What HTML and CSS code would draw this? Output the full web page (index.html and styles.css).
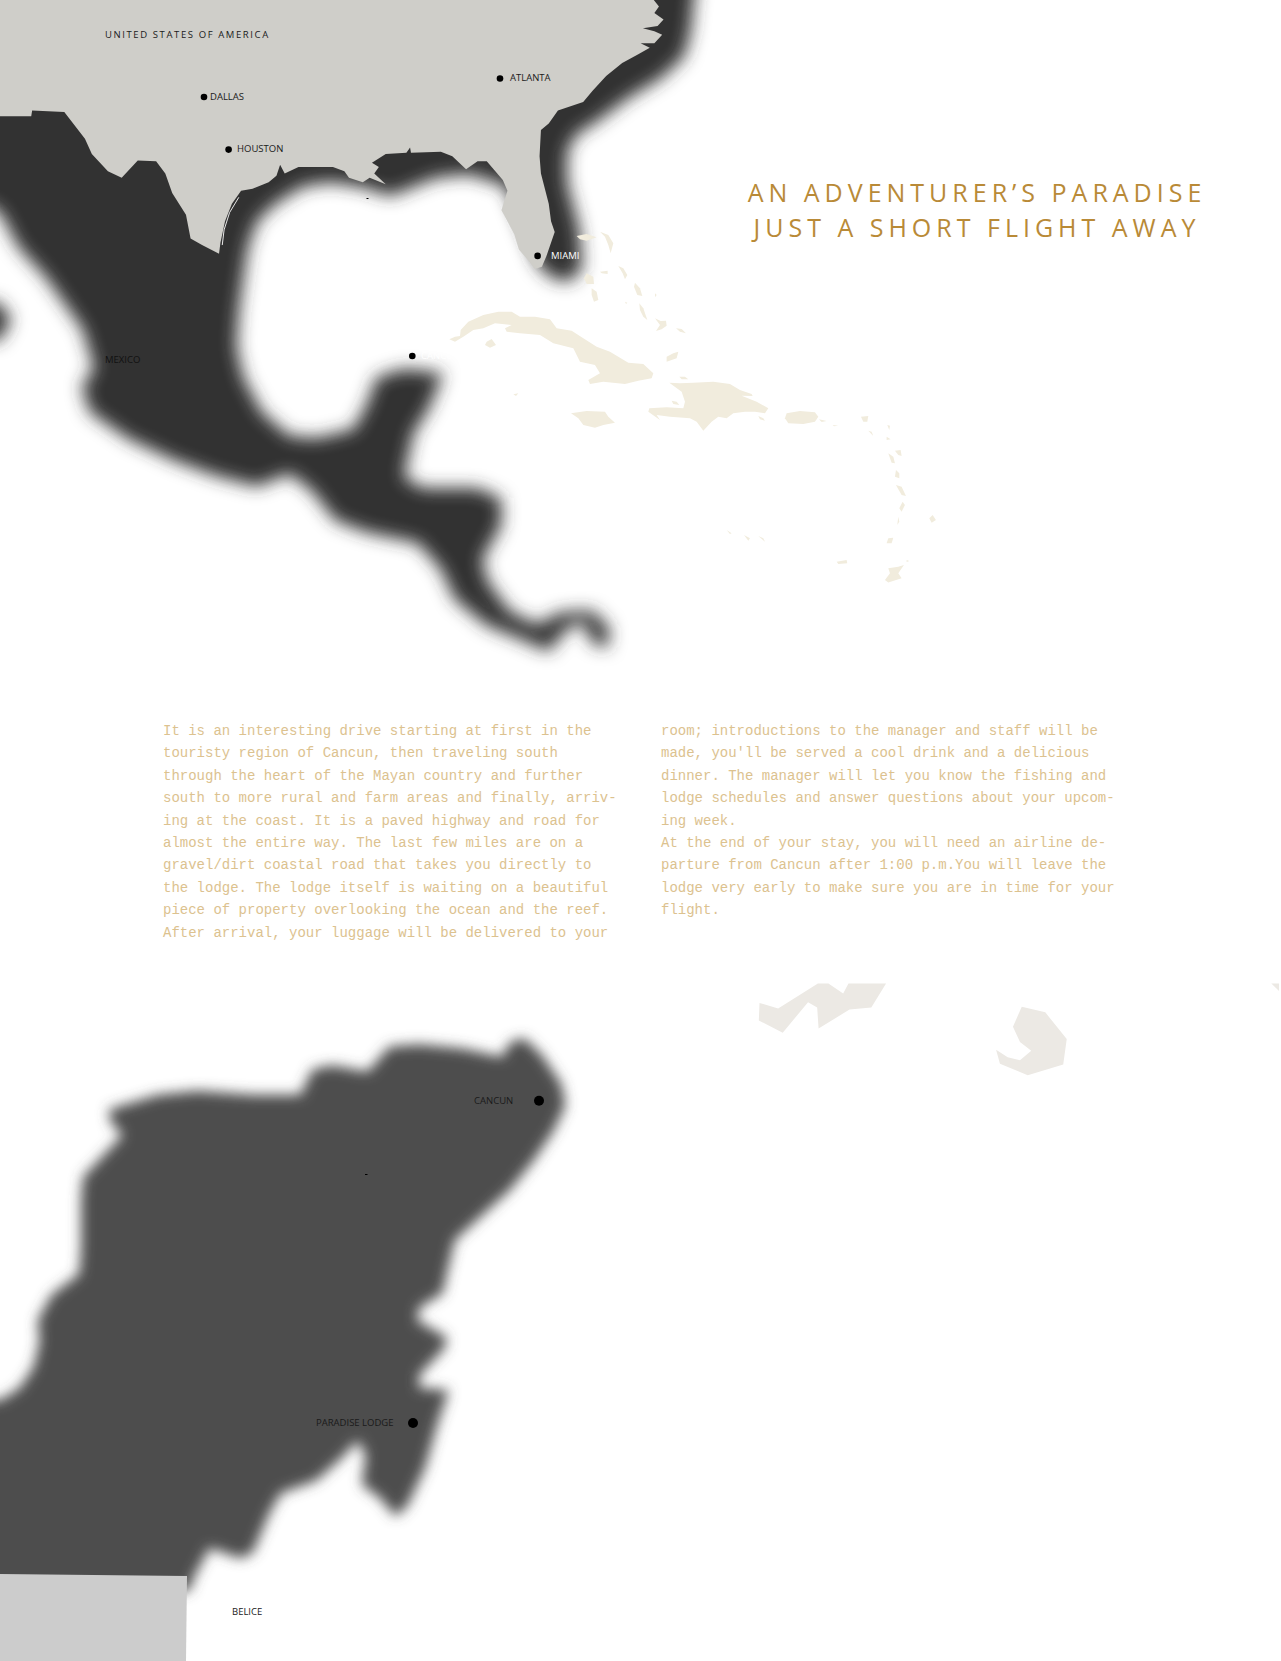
FILE: index.html
```html
<!DOCTYPE html>
<html lang="en">
<head>
<meta charset="utf-8">
<title>An Adventurer's Paradise</title>
<link rel="stylesheet" href="styles.css">
</head>
<body>
<main class="page">
  <section class="map map-top">
    <svg class="map-art" viewBox="0 0 1281 720" aria-hidden="true">
      <defs>
        <filter id="soft" x="-20%" y="-20%" width="140%" height="140%"><feGaussianBlur stdDeviation="8.5"/></filter>
        <filter id="soft-low" x="-20%" y="-20%" width="140%" height="140%"><feGaussianBlur stdDeviation="6.5"/></filter>
        <filter id="crisp"><feGaussianBlur stdDeviation="0.35"/></filter>
      </defs>
      <g filter="url(#soft)" class="land-dark">
        <g transform="scale(.4592 .4337)">
          <polygon points="-150,-150 1530,-150 1510,10 1505,70 1490,130 1440,180 1370,225 1300,280 1255,310 1235,350 1235,420 1262,530 1268,620 1238,650 1200,640 1170,610 1100,428 1020,402 950,410 880,440 850,452 790,432 720,420 660,430 600,470 560,510 540,570 530,640 520,720 515,800 530,870 570,950 630,1005 690,1010 770,990 800,930 820,870 880,850 965,860 935,940 900,1000 880,1100 920,1125 1040,1125 1092,1150 1092,1210 1050,1290 1062,1340 1110,1410 1170,1440 1220,1412 1290,1408 1328,1450 1322,1495 1290,1482 1268,1432 1232,1452 1195,1502 1130,1472 1060,1442 990,1382 960,1312 910,1252 800,1228 730,1200 680,1132 630,1092 560,1122 470,1097 380,1062 280,1012 195,950 178,890 205,850 180,760 100,640 40,570 0,490 -150,400"/>
          <polygon points="-100,700 -5,695 25,735 0,785 -100,785"/>
        </g>
      </g>
      <g class="land-usa" filter="url(#crisp)">
        <g transform="scale(.4592 .4337)">
          <polygon points="-5,-5 1420,-5 1435,15 1425,30 1445,45 1432,60 1400,65 1425,72 1442,80 1425,100 1395,100 1415,110 1390,125 1355,145 1320,175 1290,210 1270,235 1215,255 1195,285 1178,300 1175,360 1178,400 1195,470 1200,510 1208,535 1190,590 1180,615 1165,620 1150,600 1130,575 1120,540 1105,510 1092,485 1105,440 1095,415 1060,372 1040,372 1015,390 985,360 960,350 895,352 893,340 885,352 840,355 810,375 825,385 815,400 840,425 805,410 790,420 760,410 750,395 725,385 690,385 650,385 620,400 610,380 602,405 585,420 550,435 525,440 505,470 490,510 480,560 477,585 440,565 415,550 405,495 375,445 360,400 340,372 300,370 265,410 235,395 200,355 185,320 140,258 70,255 68,268 -5,268"/>
        </g>
      </g>
      <polyline class="sandbar" transform="scale(.4592 .4337)" points="520,455 500,490 488,530 484,565"/>
      <g class="land-cream" filter="url(#crisp)">
        <g transform="translate(440 160) scale(.3333)">
          <polygon points="28,538 45,530 60,528 62,510 85,485 130,465 175,455 215,455 240,470 285,470 330,478 350,505 395,512 430,535 470,560 510,575 535,590 565,608 610,612 640,640 635,655 595,662 555,672 490,665 450,672 445,660 480,640 465,615 420,605 400,565 340,550 300,525 240,520 200,515 195,505 215,495 165,490 130,505 100,510 70,530 45,545"/>
          <polygon points="140,545 155,537 168,555 150,563 135,555"/>
          <polygon points="688,668 720,670 760,668 820,665 870,672 900,690 935,702 938,708 905,707 950,725 985,745 975,760 945,755 915,755 880,760 860,775 835,770 815,785 790,812 770,785 750,775 690,770 650,765 660,780 625,755 628,745 680,742 730,745 735,725 725,695"/>
          <polygon points="393,760 440,753 495,755 505,770 525,788 490,795 465,803 430,795 415,775"/>
          <polygon points="1040,760 1080,753 1125,757 1135,770 1125,785 1090,792 1045,790 1035,775"/>
          <polygon points="1345,1225 1375,1220 1392,1215 1375,1240 1385,1255 1345,1268 1335,1260 1350,1240"/>
          <polygon points="410,228 440,222 470,232 440,242 420,238"/>
          <polygon points="480,215 505,225 520,250 512,280 505,255 495,230"/>
          <polygon points="535,318 550,325 562,345 555,358 548,340"/>
          <polygon points="480,335 503,332 503,342 485,340"/>
          <polygon points="440,340 460,350 462,372 440,372 432,355"/>
          <polygon points="455,385 470,395 475,420 462,425 455,405"/>
          <polygon points="585,368 600,385 607,408 592,405 582,380"/>
          <polygon points="598,430 610,445 622,480 610,470 600,450"/>
          <polygon points="645,400 650,405 645,412"/>
          <polygon points="555,425 562,428 558,432"/>
          <polygon points="645,475 662,483 678,482 680,497 665,508 648,513 660,495"/>
          <polygon points="708,505 725,507 738,520 720,515"/>
          <polygon points="680,590 700,580 715,575 710,595 680,605"/>
          <polygon points="718,650 735,650 745,658 725,658"/>
          <polygon points="220,703 235,700 228,708"/>
          <polygon points="695,722 710,725 718,735 700,732"/>
          <polygon points="955,768 970,775 975,782 960,778"/>
          <polygon points="1137,778 1160,783 1145,786"/>
          <polygon points="1178,795 1195,797 1182,799"/>
          <polygon points="1263,770 1285,768 1282,785 1270,785"/>
          <polygon points="1342,795 1350,797 1348,810"/>
          <polygon points="1285,812 1295,815 1300,828"/>
          <polygon points="1340,830 1352,838 1340,840"/>
          <polygon points="1345,880 1360,890 1365,910 1355,908"/>
          <polygon points="1365,872 1382,870 1385,888 1375,885"/>
          <polygon points="1368,930 1378,940 1378,955 1365,950"/>
          <polygon points="1368,975 1385,980 1398,1008 1385,1005"/>
          <polygon points="1388,1025 1395,1035 1385,1055 1378,1045"/>
          <polygon points="1375,1070 1378,1085 1372,1095"/>
          <polygon points="1345,1135 1360,1133 1355,1150 1340,1150"/>
          <polygon points="1468,1075 1478,1065 1488,1080 1475,1088"/>
          <polygon points="860,1110 875,1120 870,1122"/>
          <polygon points="912,1125 930,1135 925,1142"/>
          <polygon points="955,1128 970,1135 975,1145"/>
          <polygon points="1190,1205 1220,1200 1222,1210 1195,1212"/>
          <polygon points="1400,1200 1408,1203 1400,1206"/>
        </g>
      </g>
      <circle class="pin" cx="500" cy="78.5" r="3.3"/>
      <circle class="pin" cx="204" cy="97" r="3.3"/>
      <circle class="pin" cx="228.6" cy="149.6" r="3.3"/>
      <circle class="pin" cx="537.6" cy="255.9" r="3.3"/>
      <circle class="pin" cx="412.3" cy="356" r="3.3"/>
      <rect class="pin" x="366.5" y="198" width="2" height="1"/>
    </svg>
    <span class="label label-wide at-usa">UNITED STATES OF AMERICA</span>
    <span class="label at-atlanta">ATLANTA</span>
    <span class="label at-dallas">DALLAS</span>
    <span class="label at-houston">HOUSTON</span>
    <span class="label label-light at-miami">MIAMI</span>
    <span class="label label-light at-cancun">CANCUN</span>
    <span class="label at-mexico">MEXICO</span>
    <h1 class="title">AN ADVENTURER’S PARADISE<br>JUST A SHORT FLIGHT AWAY</h1>
  </section>

  <section class="story">
    <p class="story-col">It is an interesting drive starting at first in the<br>touristy region of Cancun, then traveling south<br>through the heart of the Mayan country and further<br>south to more rural and farm areas and finally, arriv-<br>ing at the coast. It is a paved highway and road for<br>almost the entire way. The last few miles are on a<br>gravel/dirt coastal road that takes you directly to<br>the lodge. The lodge itself is waiting on a beautiful<br>piece of property overlooking the ocean and the reef.<br>After arrival, your luggage will be delivered to your</p>
    <p class="story-col">room; introductions to the manager and staff will be<br>made, you'll be served a cool drink and a delicious<br>dinner. The manager will let you know the fishing and<br>lodge schedules and answer questions about your upcom-<br>ing week.<br>At the end of your stay, you will need an airline de-<br>parture from Cancun after 1:00 p.m.You will leave the<br>lodge very early to make sure you are in time for your<br>flight.</p>
  </section>

  <section class="map map-bottom">
    <svg class="map-art" viewBox="0 970 1281 691" aria-hidden="true">
      <g class="land-pale" filter="url(#crisp)">
        <g transform="translate(730 960) scale(.3515 .3515)">
          <polygon points="84,122 137,138 250,67 280,67 322,95 337,67 444,67 402,135 340,141 252,195 248,135 222,120 150,207 82,172"/>
          <polygon points="830,133 897,149 958,225 948,297 847,328 768,295 757,255 790,277 825,285 857,258 825,233 805,190"/>
          <polygon points="1540,67 1562,67 1562,88"/>
        </g>
      </g>
      <g filter="url(#soft-low)" class="land-yucatan">
        <polygon transform="translate(0 1000) scale(.3954 .4216)" points="-100,950 0,950 50,920 85,870 100,810 95,760 130,700 200,650 205,590 205,470 210,420 260,370 310,320 280,290 275,260 400,225 500,215 640,225 760,225 790,165 840,155 930,170 985,110 1060,105 1170,115 1270,135 1290,100 1325,90 1370,130 1420,200 1430,250 1400,310 1350,380 1290,450 1220,510 1150,570 1130,650 1120,695 1060,730 1055,760 1130,800 1125,825 1060,890 1060,920 1135,925 1105,1010 1075,1110 1030,1200 1000,1225 960,1180 915,1150 925,1080 905,1045 860,1090 800,1140 710,1170 680,1220 640,1310 610,1325 530,1300 490,1370 480,1400 -100,1500"/>
      </g>
      <polygon class="land-belice" points="-1,1574 187,1576 186,1662 -1,1662"/>
      <circle class="pin" cx="539" cy="1100.8" r="5"/>
      <circle class="pin" cx="413" cy="1423" r="5"/>
      <rect class="pin" x="365" y="1174" width="2.5" height="1"/>
    </svg>
    <span class="label at-cancun-big">CANCUN</span>
    <span class="label at-lodge">PARADISE LODGE</span>
    <span class="label at-belice">BELICE</span>
  </section>
</main>
</body>
</html>
```

FILE: styles.css
```css
html, body {
  margin: 0;
  padding: 0;
  background: #fff;
}

.page {
  width: 1281px;
  height: 1661px;
  display: flex;
  flex-direction: column;
  overflow: hidden;
  font-family: "Open Sans", "Noto Sans", sans-serif;
}

.map {
  position: relative;
}

.map-top {
  height: 720px;
  flex: none;
}

.map-bottom {
  flex: 1;
}

.map-art {
  position: absolute;
  inset: 0;
  width: 100%;
  height: 100%;
  display: block;
}

.land-dark { fill: #333; }
.land-usa { fill: #cfcec9; }
.land-cream { fill: #f1ecdd; }
.land-pale { fill: #ece9e4; }
.land-yucatan { fill: #4d4d4d; }
.land-belice { fill: #ccc; }
.pin { fill: #000; }
.sandbar { fill: none; stroke: #fff; stroke-width: 2; }

.label {
  position: absolute;
  font-size: 9.5px;
  line-height: 12px;
  color: #1a1a1a;
  white-space: nowrap;
}

.label-wide { letter-spacing: 1.6px; }
.label-light { color: #fff; }

.at-usa { left: 105px; top: 29px; }
.at-atlanta { left: 510px; top: 72px; }
.at-dallas { left: 210px; top: 91px; }
.at-houston { left: 237px; top: 143px; }
.at-miami { left: 551px; top: 250px; }
.at-cancun { left: 421px; top: 350px; }
.at-mexico { left: 105px; top: 354px; color: #111; }
.at-cancun-big { left: 474px; top: 125px; }
.at-lodge { left: 316px; top: 447px; }
.at-belice { left: 232px; top: 636px; }

.title {
  position: absolute;
  left: 702px;
  top: 175px;
  width: 550px;
  margin: 0;
  text-align: center;
  font-size: 25px;
  font-weight: 400;
  line-height: 35px;
  letter-spacing: 5px;
  color: #b98a37;
}

.story {
  height: 250px;
  flex: none;
  display: flex;
  padding-left: 163px;
}

.story-col {
  margin: 0;
  width: 498px;
  flex: none;
  font-family: "Liberation Mono", monospace;
  font-size: 14px;
  line-height: 22.4px;
  color: #dcc28f;
}
```
